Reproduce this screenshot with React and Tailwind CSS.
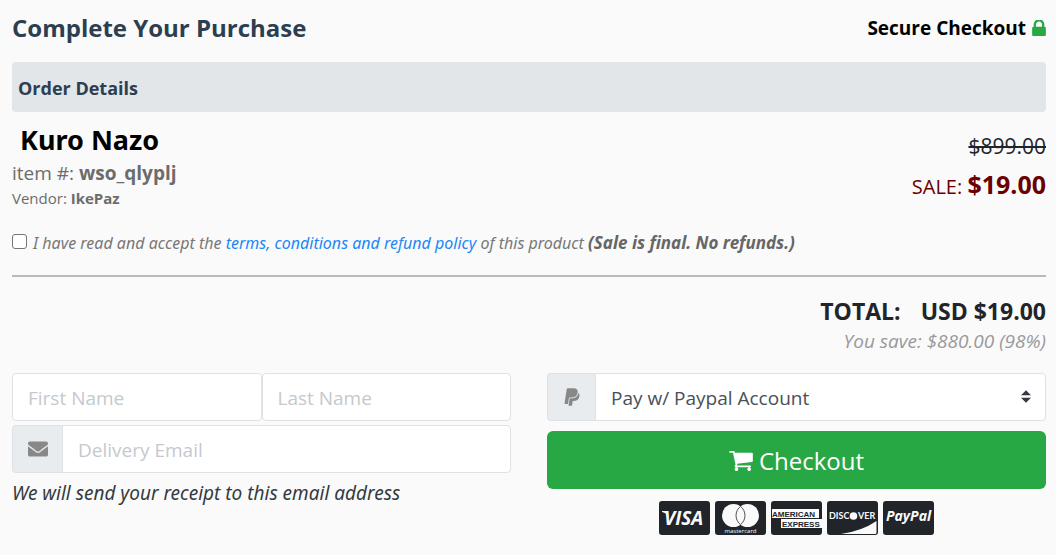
import { useState } from "react";
import { FaEnvelope, FaPaypal } from "react-icons/fa";

const LockIcon = () => (
  <svg viewBox="320 192 1152 1344" className="h-4 w-[14px] fill-[#28a745]" aria-hidden="true">
    <path d="M640 768h512v-192q0-106-75-181t-181-75-181 75-75 181v192zm832 96v576q0 40-28 68t-68 28h-960q-40 0-68-28t-28-68v-576q0-40 28-68t68-28h32v-192q0-184 132-316t316-132 316 132 132 316v192h32q40 0 68 28t28 68z" />
  </svg>
);

const CartIcon = () => (
  <svg viewBox="64 256 1664 1408" className="h-5 w-6 fill-white" aria-hidden="true">
    <path d="M704 1536q0 52-38 90t-90 38-90-38-38-90 38-90 90-38 90 38 38 90zm896 0q0 52-38 90t-90 38-90-38-38-90 38-90 90-38 90 38 38 90zm128-1088v512q0 24-16.500 42.500t-40.500 21.500l-1044 122q13 60 13 70 0 16-24 64h920q26 0 45 19t19 45-19 45-45 19h-1024q-26 0-45-19t-19-45q0-11 8-31.500t16-36 21.500-40 15.500-29.500l-177-823h-204q-26 0-45-19t-19-45 19-45 45-19h256q16 0 28.500 6.500t19.500 15.500 13 24.500 8 26 5.500 29.500 4.500 26h1201q26 0 45 19t19 45z" />
  </svg>
);

function Card({ label, children }) {
  return (
    <svg viewBox="0 0 51 34" className="h-[34px] w-[51px]" role="img" aria-label={label}>
      <rect width="51" height="34" rx="3" fill="#212529" />
      {children}
    </svg>
  );
}

function Cards() {
  return (
    <div className="mt-3 flex justify-center gap-[5px] font-['Open_Sans',sans-serif]">
      <Card label="Visa">
        <path d="M3 10h5l2 7q-2-5-7-6z" fill="#fafafa" />
        <text x="5" y="24" fontSize="19" fontWeight="700" fontStyle="italic" fill="#fafafa">VISA</text>
      </Card>
      <Card label="Mastercard">
        <circle cx="18.500" cy="14.500" r="11.500" fill="#fafafa" />
        <circle cx="32.500" cy="14.500" r="11.500" fill="#fafafa" />
        <path d="M25.500 5.400a11.500 11.500 0 0 1 0 18.200a11.500 11.500 0 0 1 0-18.200z" fill="#fafafa" stroke="#212529" strokeWidth="0.800" />
        <text x="25.500" y="31.500" fontSize="6" fontWeight="500" textAnchor="middle" fill="#fafafa">mastercard</text>
      </Card>
      <Card label="American Express">
        <rect x="1" y="8" width="47" height="9" fill="#fafafa" />
        <rect x="10" y="18" width="41" height="9" fill="#fafafa" />
        <text x="1" y="15.500" fontSize="8" fontWeight="700" fontFamily="Liberation Sans" fill="#212529">AMERICAN</text>
        <text x="11" y="25.500" fontSize="8" fontWeight="700" fontFamily="Liberation Sans" fill="#212529">EXPRESS</text>
      </Card>
      <Card label="Discover">
        <text x="2" y="18" fontSize="9" fontWeight="700" fontFamily="Lato" fill="#fafafa">DISC</text>
        <circle cx="26.500" cy="15" r="3.800" fill="#fafafa" />
        <text x="31" y="18" fontSize="9" fontWeight="700" fontFamily="Lato" fill="#fafafa">VER</text>
        <path d="M49.500 20v11.500a1.500 1.500 0 0 1-1.500 1.500H14Q35 30 49.500 20z" fill="#fafafa" />
      </Card>
      <Card label="PayPal">
        <text x="3" y="20" fontSize="14" fontWeight="700" fontStyle="italic" fill="#fafafa">PayPal</text>
      </Card>
    </div>
  );
}

const inputClass =
  "h-12 w-full min-w-0 border border-[#dee2e6] bg-white px-[15px] pt-[2px] text-[19px] text-[#495057] placeholder:text-[#c5c9ce] outline-none";

const addonClass =
  "flex shrink-0 items-center justify-center rounded-l border border-r-0 border-[#dee2e6] bg-[#e9ecef] text-[#888888]";

export default function App() {
  const [accepted, setAccepted] = useState(false);
  const [form, setForm] = useState({ first: "", last: "", email: "" });

  const handleChange = (e) => setForm({ ...form, [e.target.name]: e.target.value });

  return (
    <main className="bg-[#fafafa] pt-3 pr-[10px] pb-5 pl-3 font-['Open_Sans',sans-serif] text-[#212529]">
      <header className="flex items-center justify-between">
        <h1 className="text-2xl leading-8 font-bold text-[#2c3e50]">Complete Your Purchase</h1>
        <div className="flex items-center gap-[6px] text-[19px] font-bold text-black">
          Secure Checkout <LockIcon />
        </div>
      </header>

      <h2 className="mt-[18px] rounded bg-[#e2e6e9] px-[6px] pt-[14px] pb-3 text-lg leading-6 font-bold text-[#2c3e50]">
        Order Details
      </h2>

      <section className="mt-3 flex justify-between">
        <div className="text-[#6c6c6c]">
          <h3 className="pl-2 font-['Noto_Sans',sans-serif] text-[27px] leading-8 font-bold text-black">Kuro Nazo</h3>
          <p className="mt-1 text-[19px] leading-[26px]">
            item #: <b>wso_qlyplj</b>
          </p>
          <p className="text-[15px] leading-6">
            Vendor: <b>IkePaz</b>
          </p>
        </div>
        <div className="pt-[6px] text-right">
          <p className="text-[21px] leading-8 line-through">$899.00</p>
          <p className="mt-1 text-xl leading-9 text-[#6b0000]">
            SALE: <b className="text-[25px] leading-9">$19.00</b>
          </p>
        </div>
      </section>

      <div className="mt-[21px] flex items-center gap-[6px] text-base leading-6 text-[#777777] italic">
        <input
          id="accept"
          type="checkbox"
          checked={accepted}
          onChange={(e) => setAccepted(e.target.checked)}
          className="mb-1 size-[15px] shrink-0 appearance-none rounded-[3px] border border-[#767676] bg-white checked:bg-[#007bff]"
        />
        <label htmlFor="accept" className="font-['Noto_Sans',sans-serif]">
          I have read and accept the{" "}
          <a href="#terms" className="text-[#1e87f5]">terms, conditions and refund policy</a> of this product{" "}
          <b className="text-[17px] leading-6 text-[#666666]">(Sale is final. No refunds.)</b>
        </label>
      </div>

      <hr className="mt-5 border-t-2 border-[#b8bcc2]" />

      <section className="mt-[18px] text-right">
        <p className="flex justify-end gap-5 text-[23px] leading-8 font-bold">
          <span>TOTAL:</span>
          <span>USD $19.00</span>
        </p>
        <p className="text-[19px] leading-7 text-[#999999] italic">You save: $880.00 (98%)</p>
      </section>

      <form className="mt-[18px] grid grid-cols-2 gap-9" onSubmit={(e) => e.preventDefault()}>
        <div>
          <div className="flex">
            <input name="first" aria-label="First Name" placeholder="First Name" value={form.first} onChange={handleChange} className={`${inputClass} rounded`} />
            <input name="last" aria-label="Last Name" placeholder="Last Name" value={form.last} onChange={handleChange} className={`${inputClass} rounded`} />
          </div>
          <div className="mt-1 flex">
            <span className={`${addonClass} w-[50px]`}>
              <FaEnvelope size={20} />
            </span>
            <input name="email" type="email" aria-label="Delivery Email" placeholder="Delivery Email" value={form.email} onChange={handleChange} className={`${inputClass} rounded-r`} />
          </div>
          <p className="mt-1 font-['Noto_Sans',sans-serif] text-[19px] leading-8 text-[#343a40] italic">
            We will send your receipt to this email address
          </p>
        </div>

        <div>
          <div className="flex">
            <span className={`${addonClass} w-12`}>
              <FaPaypal size={20} />
            </span>
            <div className="relative flex-1">
              <select aria-label="Payment method" className={`${inputClass} appearance-none rounded-r`}>
                <option>Pay w/ Paypal Account</option>
              </select>
              <svg viewBox="0 0 4 5" className="pointer-events-none absolute top-[17px] right-[15px] h-[13px] w-[10px] fill-[#343a40]" aria-hidden="true">
                <path d="M2 0L0 2h4zm0 5L0 3h4z" />
              </svg>
            </div>
          </div>
          <button className="mt-[10px] flex h-[58px] w-full items-center justify-center gap-[6px] rounded-md bg-[#28a745] pt-[2px] text-2xl text-white">
            <CartIcon /> Checkout
          </button>
          <Cards />
        </div>
      </form>
    </main>
  );
}
